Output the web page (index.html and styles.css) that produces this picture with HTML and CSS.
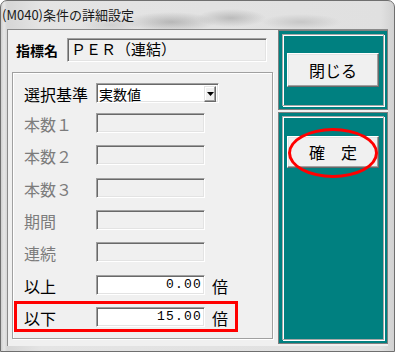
FILE: index.html
```html
<!DOCTYPE html>
<html lang="ja">
<head>
  <meta charset="UTF-8" />
  <title>(M040)条件の詳細設定</title>
  <link rel="stylesheet" href="styles.css">
</head>
<body>
  <div class="window">
    <div class="titlebar"><span class="title">(M040)条件の詳細設定</span></div>
    <div class="client">
      <div class="main">
        <div class="indicator">
          <span class="indicator-label">指標名</span>
          <div class="indicator-value">ＰＥＲ（連結）</div>
        </div>
        <div class="group">
          <div class="row row-select">
            <span class="label">選択基準</span>
            <div class="combo">
              <span class="combo-text">実数値</span>
              <span class="combo-btn">
                <svg width="7" height="4" viewBox="0 0 7 4"><path d="M0 0H7L3.5 4Z" fill="#000"/></svg>
              </span>
            </div>
          </div>
          <div class="row disabled"><span class="label">本数１</span><div class="field"></div></div>
          <div class="row disabled"><span class="label">本数２</span><div class="field"></div></div>
          <div class="row disabled"><span class="label">本数３</span><div class="field"></div></div>
          <div class="row disabled"><span class="label">期間</span><div class="field"></div></div>
          <div class="row disabled"><span class="label">連続</span><div class="field"></div></div>
          <div class="row"><span class="label">以上</span><div class="field active">0.00</div><span class="unit">倍</span></div>
          <div class="row marked">
            <span class="label">以下</span><div class="field active">15.00</div><span class="unit">倍</span>
            <span class="mark"></span>
          </div>
        </div>
      </div>
      <div class="side">
        <div class="panel panel-top">
          <div class="panel-inner">
            <button class="btn">閉じる</button>
          </div>
        </div>
        <div class="panel panel-bottom">
          <div class="panel-inner">
            <div class="btn-wrap">
              <button class="btn btn-confirm">確　定</button>
              <span class="ring"></span>
            </div>
          </div>
        </div>
      </div>
    </div>
  </div>
</body>
</html>
```

FILE: styles.css
```css
body {
  margin: 0;
  background: #fff;
}

.window {
  width: 395px;
  height: 352px;
  box-sizing: border-box;
  border: 1px solid #6f6f6f;
  border-radius: 7px 7px 0 0;
  overflow: hidden;
  font-family: "Noto Sans CJK JP", sans-serif;
  color: #000;
  background:
    radial-gradient(ellipse 45px 10px at 170px 21px, rgba(140,140,140,0.5), transparent),
    radial-gradient(ellipse 35px 9px at 230px 17px, rgba(140,140,140,0.45), transparent),
    radial-gradient(ellipse 40px 8px at 300px 21px, rgba(150,150,150,0.35), transparent),
    radial-gradient(ellipse 30px 8px at 110px 24px, rgba(160,160,160,0.3), transparent),
    linear-gradient(to right, #cfcfcf 0, #e6e6e6 3px, #d6d6d6 6px, #e4e4e4 40px, #e0e0e0 380px, #cfcfcf 395px);
}

.titlebar {
  height: 28px;
  padding-left: 1px;
}

.title {
  display: block;
  padding-top: 5px;
  font-size: 13px;
  line-height: 17px;
  color: #1a1a1a;
}

.client {
  margin-left: 6px;
  width: 381px;
  height: 317px;
  box-sizing: border-box;
  border-top: 1px solid #8a8a8a;
  border-left: 1px solid #8a8a8a;
  background: #f0f0f0;
  display: flex;
}

.main {
  width: 270px;
}

/* indicator name row */
.indicator {
  display: flex;
  align-items: center;
  margin-top: 8px;
  height: 24px;
  padding-left: 8px;
}

.indicator-label {
  width: 51px;
  font-size: 14px;
  font-weight: bold;
}

.indicator-value {
  width: 200px;
  height: 24px;
  box-sizing: border-box;
  padding-left: 3px;
  font-size: 15px;
  line-height: 20px;
  border: 1px solid;
  border-color: #a0a0a0 #fff #fff #a0a0a0;
  box-shadow: inset 1px 1px 0 #696969, inset -1px -1px 0 #e3e3e3;
}

/* group box */
.group {
  margin: 10px 0 0 4px;
  width: 261px;
  height: 267px;
  box-sizing: border-box;
  border: 1px solid #a0a0a0;
  box-shadow: inset 1px 1px 0 #fff, 1px 1px 0 #fff;
  padding: 10px 0 0 11px;
}

.row {
  display: flex;
  align-items: center;
  height: 20px;
}

.row + .row {
  margin-top: 12.33px;
}

.row-select + .row {
  margin-top: 10px;
}

.label {
  width: 72px;
  font-size: 16px;
  line-height: 20px;
  padding-top: 2px;
}

.disabled .label {
  color: #7c7c7c;
}

.combo,
.field {
  height: 20px;
  box-sizing: border-box;
  border: 1px solid;
  border-color: #a0a0a0 #fff #fff #a0a0a0;
  box-shadow: inset 1px 1px 0 #696969, inset -1px -1px 0 #e3e3e3;
}

.combo {
  width: 123px;
  background: #fff;
  display: flex;
  align-items: center;
  justify-content: space-between;
  padding: 2px 2px 1px 2px;
}

.combo-text {
  font-size: 14px;
  line-height: 16px;
}

.combo-btn {
  width: 12px;
  height: 16px;
  box-sizing: border-box;
  background: #f0f0f0;
  border: 1px solid;
  border-color: #e3e3e3 #696969 #696969 #e3e3e3;
  box-shadow: inset -1px -1px 0 #a0a0a0, inset 1px 1px 0 #fff;
  display: flex;
  align-items: center;
  justify-content: center;
}

.field {
  width: 109px;
  background: #f0f0f0;
}

.field.active {
  background: #fff;
  text-align: right;
  padding-right: 2px;
  font-family: "Liberation Mono", monospace;
  font-size: 13px;
  letter-spacing: 1.2px;
  line-height: 18px;
}

.unit {
  margin-left: 7px;
  font-size: 16px;
  line-height: 20px;
  padding-top: 2px;
}

.marked {
  position: relative;
}

.mark {
  position: absolute;
  left: -10px;
  top: -6px;
  width: 224px;
  height: 31px;
  box-sizing: border-box;
  border: 3px solid #f00;
}

/* right side panels */
.side {
  width: 110px;
}

.panel {
  box-sizing: border-box;
  border: 1px solid #808080;
  background: #008080;
  padding: 3px;
}

.panel-top {
  height: 80px;
}

.panel-bottom {
  height: 232px;
  margin-top: 2px;
}

.panel-inner {
  height: 100%;
  box-sizing: border-box;
  border: 1px solid #a8a8a8;
  box-shadow: inset 1px 1px 0 #fff, 1px 1px 0 #fff;
  display: flex;
  justify-content: center;
  align-items: flex-start;
}

.panel-top .panel-inner {
  padding-top: 18px;
}

.panel-bottom .panel-inner {
  padding-top: 19px;
}

.btn {
  width: 92px;
  height: 34px;
  margin: 0;
  padding: 0;
  background: #f0f0f0;
  border: 1px solid;
  border-color: #fff #696969 #696969 #fff;
  box-shadow: inset -1px -1px 0 #a0a0a0, inset 1px 1px 0 #e3e3e3;
  font-family: "Noto Sans CJK JP", sans-serif;
  font-size: 16px;
  color: #000;
}

.btn-wrap {
  position: relative;
}

.btn-confirm {
  height: 32px;
}

.ring {
  position: absolute;
  left: 1px;
  top: -8px;
  width: 90px;
  height: 50px;
  box-sizing: border-box;
  border: 3px solid #f00;
  border-radius: 50%;
}
```
